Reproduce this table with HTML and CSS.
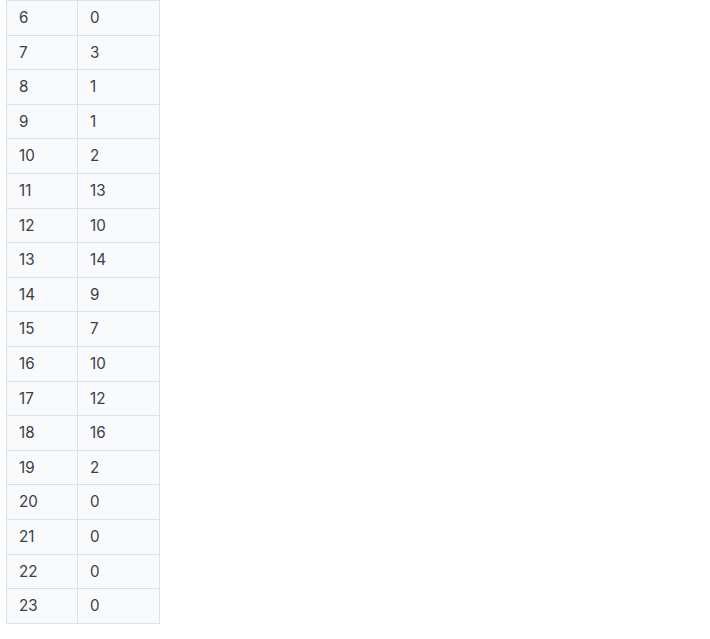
FILE: index.html
```html
<!DOCTYPE html>
<html>
<head>
<meta charset="utf-8">
<link rel="stylesheet" href="styles.css">
</head>
<body>
<table class="grid">
<tbody>
<tr><td>6</td><td>0</td></tr>
<tr><td>7</td><td>3</td></tr>
<tr><td>8</td><td>1</td></tr>
<tr><td>9</td><td>1</td></tr>
<tr><td>10</td><td>2</td></tr>
<tr><td>11</td><td>13</td></tr>
<tr><td>12</td><td>10</td></tr>
<tr><td>13</td><td>14</td></tr>
<tr><td>14</td><td>9</td></tr>
<tr><td>15</td><td>7</td></tr>
<tr><td>16</td><td>10</td></tr>
<tr><td>17</td><td>12</td></tr>
<tr><td>18</td><td>16</td></tr>
<tr><td>19</td><td>2</td></tr>
<tr><td>20</td><td>0</td></tr>
<tr><td>21</td><td>0</td></tr>
<tr><td>22</td><td>0</td></tr>
<tr><td>23</td><td>0</td></tr>
</tbody>
</table>
</body>
</html>
```
FILE: styles.css
```css
html, body {
  margin: 0;
  padding: 0;
  background: #ffffff;
}
body {
  padding-left: 6px;
  font-family: Inter, "Noto Sans", sans-serif;
  font-size: 15.2px;
  line-height: 21.6px;
  color: #3a3f47;
}
.grid {
  border-collapse: collapse;
  background: #f9fafc;
}
.grid td {
  border: 1px solid #dae2ea;
  padding: 6px 12px;
  text-align: left;
  vertical-align: middle;
}
.grid td:first-child {
  width: 46px;
}
.grid td:last-child {
  width: 57px;
}
```
